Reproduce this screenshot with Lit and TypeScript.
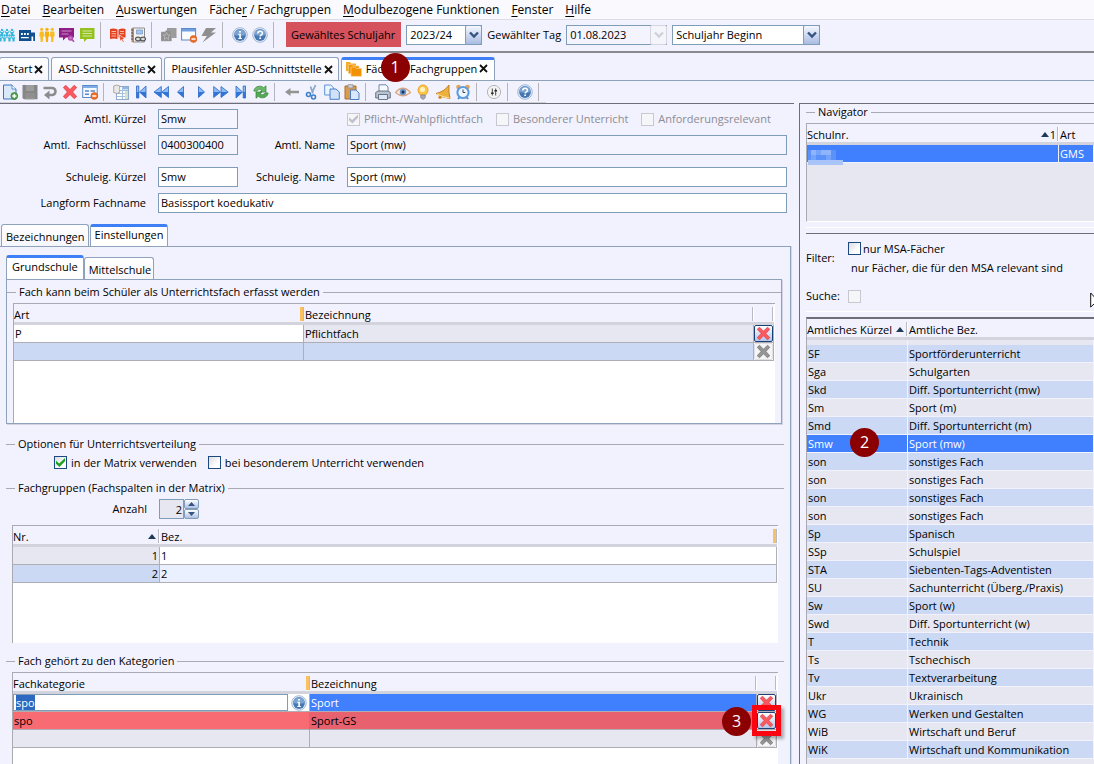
import { LitElement, html, css, svg, nothing } from "lit";
import { customElement, state, query } from "lit/decorators.js";
import { classMap } from "lit/directives/class-map.js";

const person = (x: number, c: string) => svg`
  <circle cx=${x} cy="2.300" r="1.600" fill=${c} /><path d="M${x - 2} 4.500h4l.4 5h-1l-.4 5.500h-2l-.4-5.500h-1z" fill=${c} />`;
const pupil = (x: number, y: number) => svg`
  <circle cx=${x} cy=${y} r="1.200" fill="#35b8dc" /><path d="M${x - 2.2} ${y}l1.200 2h2l1.200-2v2l-1.100 1.400v2.600h-2.200v-2.600l-1.100-1.400z" fill="#35b8dc" />`;
const orb = svg`
  <circle cx="8" cy="8" r="7.300" fill="#e6eef8" stroke="#8fa9cb" stroke-width=".8" />
  <circle cx="8" cy="8" r="5.900" fill="#4577b2" /><path d="M2.300 8a5.700 5.700 0 0 1 11.400 0q-5.500 1.500-11.400 0z" fill="#7ba3d2" />`;
const arrow = (light: string, dark: string) => svg`
  <path d=${light} fill="#8dbbf5" stroke="#2a66c0" stroke-width=".8" stroke-linejoin="round" /><path d=${dark} fill="#2f74d6" />`;

const ICONS: Record<string, unknown> = {
  pupils: svg`${pupil(3, 3)}${pupil(8, 3)}${pupil(13, 3)}${pupil(5.5, 8.5)}${pupil(10.5, 8.5)}${pupil(1.5, 8.5)}${pupil(14.5, 8.5)}`,
  school: svg`<path d="M0 3h12v2.500h4V14H0z" fill="#0f4f8f" /><path d="M2 6h1.800v2H2zM5 6h1.800v2H5zM8 6h1.800v2H8zM2 10h7.800v1.200H2zM12.500 9.500h1.700V14h-1.700z" fill="#fff" />`,
  staff: svg`${person(2.7, "#f8bd22")}${person(8, "#f5ae10")}${person(13.3, "#f8bd22")}`,
  board: svg`<path d="M0 1h15v9.500H7l-3 3v-3H0z" fill="#8e1d86" /><path d="M2.500 4h10M2.500 7h7" stroke="#c98fc6" /><circle cx="11.500" cy="11" r="2" fill="#c77cc2" stroke="#b04aa9" stroke-width="1.300" /><path d="m13 12.500 2 2.300" stroke="#b04aa9" stroke-width="1.600" />`,
  chat: svg`<path d="M1 1h14.500v11H8l-3 3v-3H1z" fill="#95c11f" /><path d="M3.500 4h9.500M3.500 6.500h9.500M3.500 9h9.500" stroke="#d5e6a4" />`,
  book: svg`<path d="M0 2q4-1 7.500.5V12Q4 11 0 12zM8.500 2.500Q12 1 15.500 2v8.500H8.500z" fill="#e2431e" /><path d="M1.500 4.500h4.500M1.500 6.700h4.500M1.500 9h4.500M10 4.500h4M10 6.700h4" stroke="#f6b7a5" /><path d="m9.500 8 5.500 3.800-2.300.4 1.500 2.400-1.200.7-1.400-2.500-1.600 1.400z" fill="#e2431e" stroke="#fff" stroke-width=".6" />`,
  binder: svg`<path d="M2.500 1h12v14h-12z" fill="#f3f3f3" stroke="#8d8d8d" /><path d="M1.500 1h2.500v14H1.500z" fill="#b28b70" /><path d="M1 3h2M1 6h2M1 9h2M1 12h2" stroke="#555" /><path d="M6.500 3h6v4h-6z" fill="#a5c5ec" stroke="#7094c0" stroke-width=".7" /><ellipse cx="8" cy="12" rx="2.500" ry="1.900" fill="#ddd" stroke="#555" stroke-width="1.200" /><ellipse cx="13" cy="12" rx="2.500" ry="1.900" fill="#ddd" stroke="#555" stroke-width="1.200" />`,
  favorites: svg`<path d="M6 1h9.500v10H6z" fill="#9b9b9b" /><path d="M0 5h4l1-1.500h5.500V14H0z" fill="#8f8f8f" stroke="#a8a8a8" stroke-width=".6" /><path d="m5.500 5.500 1 2.400 2.600.2-2 1.700.6 2.600-2.200-1.400-2.200 1.400.6-2.600-2-1.700 2.600-.2z" fill="none" stroke="#c0c0c0" stroke-width=".8" />`,
  windowRemove: svg`<rect x=".6" y="1.500" width="14" height="11.500" fill="#fbfdff" stroke="#5c88c8" /><path d="M1 2h13.300v2.500H1z" fill="#6f9fe2" /><circle cx="12.500" cy="12" r="3.400" fill="#f0722a" stroke="#c9501b" stroke-width=".6" /><path d="M10.500 12h4" stroke="#fff" stroke-width="1.500" />`,
  bolt: svg`<path d="M5 1h10l-5 4.500h5L1.500 15.500 6 9H.5z" fill="#8f8f8f" />`,
  info: svg`${orb}<path d="M7 4h2v1.500H7zM6.300 6.700h2.600v4.200h1V12H6.300v-1.100h1V7.800h-1z" fill="#fff" />`,
  help: svg`${orb}<path d="M5.800 6.500q0-2.300 2.300-2.300t2.300 2q0 1.300-1.200 1.800-1 .5-1 1.500" fill="none" stroke="#fff" stroke-width="1.500" /><path d="M7.300 10.500h1.700V12H7.300z" fill="#fff" />`,
  folders: svg`<path d="M0 1h4l1 1.500h5V10H0z" fill="#f9ab2c" /><path d="M2.500 3.500h4l1 1.500H13v7.500H2.500z" fill="#f39200" stroke="#fbd08a" stroke-width=".7" /><path d="M5 6h4l1 1.500h5.500V15.300H5z" fill="#f39200" stroke="#fbd08a" stroke-width=".7" />`,
  add: svg`<path d="M1.500 1h8.500l4 4v10H1.500z" fill="#d9e8fb" stroke="#3e74bb" /><path d="M10 1v4h4" fill="#fff" stroke="#3e74bb" stroke-width=".8" /><circle cx="12.300" cy="12" r="3.400" fill="#5aa857" stroke="#2b7a2a" stroke-width=".7" /><path d="M10.300 12h4M12.300 10v4" stroke="#fff" stroke-width="1.300" />`,
  save: svg`<path d="M.5 1h15v14.300H2L.5 14z" fill="#868686" /><path d="M4 1h8v6H4z" fill="#9d9d9d" /><path d="M3.500 9.500h9v5.800h-9z" fill="#999" /><path d="M4 11h8M4 13h8" stroke="#868686" />`,
  undo: svg`<path d="M1.500 4h8.500a3.500 3.500 0 0 1 0 7H6.500" fill="none" stroke="#8c8c8c" stroke-width="2.600" /><path d="M7.500 6.500 2 11l5.500 4.500z" fill="#8c8c8c" />`,
  remove: svg`<path d="M3.800 1.300 8 5.600l4.200-4.300 2.500 2.200L10.600 8l4.100 4.500-2.500 2.200L8 10.400l-4.200 4.300-2.500-2.200L5.400 8 1.300 3.500z" fill="#fa5a5f" stroke="#e0363c" stroke-width=".7" stroke-linejoin="round" />`,
  form: svg`<rect x=".7" y="1.500" width="14.500" height="12" fill="#f4f9ff" stroke="#5c88c8" /><path d="M1 2h14v2H1z" fill="#7fabe6" /><path d="M3 7h4M8.500 7h4.500M3 10.300h4" stroke="#5c88c8" stroke-width="1.500" /><circle cx="12.300" cy="12" r="3.400" fill="#f0722a" stroke="#c9501b" stroke-width=".6" /><path d="M10.300 12h4" stroke="#fff" stroke-width="1.500" />`,
  table: svg`<rect x="3.500" y="2.500" width="12" height="13" fill="#fff" stroke="#8fa9cb" /><path d="M4 6.500h11M4 9.500h11M4 12.500h11" stroke="#a4bfe0" /><path d="M9.500 3v12" stroke="#a4bfe0" /><path d="M10 3h5v2.500h-5z" fill="#8fb7e6" /><path d="M12 7h3v8h-3z" fill="#cfe3c8" /><path d="M.7 2q3-2 6 0v6.500q-3 2-6 0z" fill="#e8e8e4" stroke="#98988f" stroke-width=".8" />`,
  first: arrow("M3.500 2h2.300v12H3.500zM13 2v12L6.500 8z", "M13 8v6L6.500 8zM3.500 8h2.300v6H3.500z"),
  rewind: arrow("M8.300 2.500v11L1 8zM15.500 2.500v11L8.700 8z", "M8.300 8v5.500L1 8zM15.500 8v5.500L8.700 8z"),
  prev: arrow("M10.500 2.500v11L4.500 8z", "M10.500 8v5.500L4.500 8z"),
  next: arrow("M5.500 2.500v11l6-5.500z", "M5.500 8v5.500l6-5.500z"),
  forward: arrow("M.7 2.500v11L7.500 8zM8 2.500v11L15.200 8z", "M.7 8v5.500L7.500 8zM8 8v5.500L15.200 8z"),
  last: arrow("M3 2v12l6.500-6zM10.200 2h2.300v12h-2.300z", "M3 8v6l6.500-6zM10.200 8h2.300v6h-2.300z"),
  refresh: svg`<path d="M.8 7Q2 1.800 7.500 2.200q2 .2 3.200 1.500L13 1.800V8H7l2-2Q6 4 3.500 7.300z" fill="#69b968" stroke="#36843a" stroke-width=".7" stroke-linejoin="round" /><path d="M15.200 9q-1.200 5.200-6.700 4.800-2-.2-3.200-1.500L3 14.200V8h6l-2 2q3 2 5.500-1.300z" fill="#55a856" stroke="#36843a" stroke-width=".7" stroke-linejoin="round" />`,
  back: svg`<path d="M15 6.700v2.600H6.500V12L1 8l5.500-4v2.700z" fill="#939393" />`,
  cut: svg`<path d="M11.500 1 8 9M6.500 2.500 9 9.500" stroke="#8aa7cc" stroke-width="1.800" /><circle cx="4.500" cy="10.500" r="2" fill="none" stroke="#3f7fca" stroke-width="1.600" /><circle cx="9.500" cy="13" r="2" fill="none" stroke="#3f7fca" stroke-width="1.600" />`,
  copy: svg`<path d="M.7 1h6l3 3v7h-9z" fill="#edf5fe" stroke="#5c92da" /><path d="M6 5h6l3.300 3v7.300H6z" fill="#cfe2fa" stroke="#4580cc" />`,
  paste: svg`<path d="M1 2h11v13H1z" fill="#d99b50" stroke="#a9702d" /><path d="M4 .7h5V4H4z" fill="#d2d2d2" stroke="#888" stroke-width=".7" /><path d="M6.500 6H12l3 3v6.500H6.500z" fill="#d9e8fb" stroke="#4c7dc4" />`,
  print: svg`<path d="M4 .8h7L13 3v6H4z" fill="#f6faff" stroke="#6d86a8" /><path d="M.7 8.500 3 7h10l2.300 1.500V14H.7z" fill="#b9c2cf" stroke="#515c6d" stroke-width=".8" /><path d="M3.500 10.500h9v5h-9z" fill="#dce8f7" stroke="#515c6d" stroke-width=".8" />`,
  eye: svg`<path d="M.5 8.500Q8 0 15.500 8.500 8 15 .5 8.500z" fill="#fbf1e8" stroke="#dba782" stroke-width="1.300" /><circle cx="8" cy="8" r="3.300" fill="#6a97d0" /><circle cx="8" cy="8" r="1.500" fill="#1c2c4a" />`,
  bulb: svg`<path d="M5.500 11Q2.500 8.500 3 5.500 4 1 8 1t5 4.500q.5 3-2.500 5.500z" fill="#fcc64a" stroke="#eda52e" /><circle cx="7.500" cy="5.500" r="2.500" fill="#fff3c4" /><path d="M5.700 11h4.600v2.800L8 15.500l-2.300-1.700z" fill="#a4a9b2" stroke="#777" stroke-width=".6" />`,
  bell: svg`<path d="M14 1q-.5 8 1 13.500Q7 14 1 9.500 9.500 7.500 14 1z" fill="#edb03a" stroke="#bd7d1b" stroke-width=".9" /><path d="M2 9.800q5 3.500 12.500 4.200" fill="none" stroke="#fbe39a" stroke-width="1.200" /><circle cx="5" cy="13.300" r="1.600" fill="#d08a18" />`,
  alarm: svg`<circle cx="3.500" cy="3" r="2.300" fill="#e3a356" /><circle cx="12.500" cy="3" r="2.300" fill="#e3a356" /><path d="m3 15 2-2.500M13 15l-2-2.500" stroke="#4a80c4" stroke-width="1.800" /><circle cx="8" cy="8.500" r="5.600" fill="#eef6ff" stroke="#5a9be0" stroke-width="2" /><path d="M8 5.500v3h2.300" fill="none" stroke="#444" />`,
  tune: svg`<circle cx="8" cy="8" r="6.600" fill="#f4f4f4" stroke="#b5b5b5" /><path d="M6.300 4.500v7M9.700 4.500v7" stroke="#444" stroke-width="1" /><path d="M5 8.500h2.700V10H5zM8.400 6h2.700v1.500H8.400z" fill="#333" />`,
};
const icon = (name: string) => html`<svg class="icon" viewBox="0 0 16 16" aria-hidden="true">${ICONS[name]}</svg>`;

const MENU = [["", "D", "atei"], ["", "B", "earbeiten"], ["", "A", "uswertungen"], ["Fäche", "r", " / Fachgruppen"],
  ["", "M", "odulbezogene Funktionen"], ["", "F", "enster"], ["", "H", "ilfe"]];
const MAIN_TOOLS = [["pupils", "school", "staff", "board", "chat"], ["book", "binder"], ["favorites", "windowRemove", "bolt"], ["info", "help"]];
const PAGE_TOOLS = [["add", "save", "undo", "remove", "form"], ["table", "first", "rewind", "prev", "next", "forward", "last", "refresh"],
  ["back", "cut", "copy", "paste"], ["print", "eye", "bulb", "bell", "alarm"], ["tune"], ["help"]];
const SUBJECTS = [["SF", "Sportförderunterricht"], ["Sga", "Schulgarten"], ["Skd", "Diff. Sportunterricht (mw)"], ["Sm", "Sport (m)"],
  ["Smd", "Diff. Sportunterricht (m)"], ["Smw", "Sport (mw)"], ["son", "sonstiges Fach"], ["son", "sonstiges Fach"],
  ["son", "sonstiges Fach"], ["son", "sonstiges Fach"], ["Sp", "Spanisch"], ["SSp", "Schulspiel"], ["STA", "Siebenten-Tags-Adventisten"],
  ["SU", "Sachunterricht (Überg./Praxis)"], ["Sw", "Sport (w)"], ["Swd", "Diff. Sportunterricht (w)"], ["T", "Technik"],
  ["Ts", "Tschechisch"], ["Tv", "Textverarbeitung"], ["Ukr", "Ukrainisch"], ["WG", "Werken und Gestalten"],
  ["WiB", "Wirtschaft und Beruf"], ["WiK", "Wirtschaft und Kommunikation"]];

@customElement("app-root")
export class AppRoot extends LitElement {
  @state() private selected = 5;
  @query(".cell-edit") private editor!: HTMLInputElement;

  static styles = css`
    :host { display: block; font: 11px/16px "Open Sans", "Noto Sans", sans-serif; color: #000; }
    *, *::before, *::after { box-sizing: border-box; }
    button, input, select { font: inherit; color: inherit; margin: 0; border-radius: 0; }
    button { padding: 0; border: 0; background: none; }
    .app { position: relative; height: 100vh; overflow: hidden; display: flex; flex-direction: column; background: #f2f2fe; white-space: nowrap; }
    .icon { display: block; width: 16px; height: 16px; }

    .menu { display: flex; flex: none; gap: 12px; height: 20px; padding-left: 1px; background: #f9f9fe; border-bottom: 1px solid #dcdce6; font-size: 12px; line-height: 18px; }
    .menu u { text-underline-offset: 2px; }
    .main-bar { display: flex; flex: none; align-items: center; height: 33px; padding-bottom: 2px; border-bottom: 2px solid #8a8a90; background: #f2f2fe; }
    .tools { display: flex; align-items: center; }
    .main-bar .tools { margin-left: -3px; }
    .tool { width: 20px; height: 20px; display: grid; place-items: center; }
    .sep { width: 11px; height: 26px; padding-left: 3px; }
    .sep::before { content: ""; display: block; width: 1px; height: 100%; background: #b4b4ba; }
    .year { background: #d5525c; height: 25px; line-height: 25px; padding: 0 6px 0 5px; margin: 0 5px; }
    .combo { position: relative; height: 20px; }
    .combo select, .combo input { display: block; width: 100%; height: 20px; border: 1px solid #7f9db9; background: #fff; padding: 0 18px 0 3px; appearance: none; outline: none; }
    .combo input { background: #f4f4ff; }
    .combo .drop { position: absolute; right: 0; top: 0; width: 17px; height: 20px; border: 1px solid #7f9db9; border-radius: 2px; background: linear-gradient(#f4f7ff, #a9bce2); pointer-events: none; display: grid; place-items: center; }
    .combo .drop.off { background: #f4f4fb; border-color: #d5d5e0; }
    .drop svg { width: 10px; height: 8px; display: block; }
    .combo.school-year { width: 76px; margin-right: 5px; }
    .combo.day { width: 101px; margin: 0 5px; }
    .combo.phase { width: 148px; }

    .tabs { display: flex; flex: none; align-items: flex-end; gap: 2px; }
    .tab { display: flex; align-items: center; position: relative; border: 1px solid #8fa2bb; border-bottom: 0; border-radius: 3px 3px 0 0; background: linear-gradient(#fff, #f6f6fd); }
    .tab.active { border-top: 3px solid #3f7ff5; background: #fff; }
    .page-tabs { height: 28px; padding-top: 4px; border-bottom: 1px solid #8fa2bb; }
    .page-tabs .tab { height: 23px; padding: 0 5px 0 6px; gap: 2px; }
    .page-tabs .tab.active { padding: 0 6px 3px 4px; }
    .page-tabs .tab .icon { margin-right: 2px; }
    .page-tabs .tab:first-child { margin-left: -1px; padding-left: 8px; }
    .close { width: 9px; height: 12px; display: grid; place-items: center; }
    .close svg { width: 9px; height: 9px; display: block; }
    .page-bar { display: flex; flex: none; height: 22px; }
    .page-bar .sep { height: 18px; }
    .page-bar .tools { border-bottom: 1px solid #d0d0dc; }

    .work { flex: 1; min-height: 0; display: grid; grid-template-columns: minmax(0, 1fr) 295px; gap: 5px; }
    .left { border-top: 1px solid #6e6e78; display: flex; flex-direction: column; min-height: 0; padding-top: 5px; }
    .form { display: grid; grid-template-columns: 146px 80px 85px minmax(0, 1fr); column-gap: 12px; row-gap: 6px; padding-right: 7px; margin-bottom: 12px; align-items: center; }
    .form + .form { margin-bottom: 11px; }
    .form > label { text-align: right; white-space: pre; }
    .field { width: 100%; height: 20px; border: 1px solid #7f9db9; background: #fff; padding: 0 2px 2px; outline: none; }
    .field[readonly] { background: #f4f4ff; }
    .wide { grid-column: 2 / -1; }
    .checks { display: flex; gap: 13px; grid-column: 4; }
    .check { display: flex; align-items: center; gap: 4px; height: 13px; }
    .check.off { color: #8c8c94; }
    input[type="checkbox"] { appearance: none; flex: none; width: 13px; height: 13px; border: 1px solid #1c4a80; background: linear-gradient(135deg, #dcdce0, #fff 70%); }
    input[type="checkbox"]:checked::after { content: ""; display: block; width: 9px; height: 9px; margin: 1px; background: #21a121; clip-path: polygon(0 30%, 35% 60%, 100% 0, 100% 35%, 38% 100%, 0 65%); }
    input[type="checkbox"]:disabled { border-color: #c8c8d0; background: #f6f6f8; }
    input[type="checkbox"]:disabled:checked::after { background: #c0c0c8; }

    .sub-tabs { padding-left: 1px; gap: 1px; }
    .sub-tabs .tab { height: 22px; padding: 2px 3px 0 4px; }
    .sub-tabs .tab.active { padding: 0 4px 4px; }
    .panel { flex: 1; min-height: 0; overflow: hidden; display: flex; flex-direction: column; border: solid #8fa2bb; border-width: 1px 1px 0 0; margin-right: 3px; padding: 8px 6px 0 6px; box-shadow: 1px 0 0 #d5d9ea; }
    .school-tabs { gap: 0; }
    .school-tabs .tab { height: 22px; padding: 2px 2px 0 4px; }
    .school-tabs .tab.active { height: 24px; padding: 0 5px 4px; }
    .school { flex: none; border: 1px solid #8fa2bb; box-shadow: 1px 1px 0 #d0d4e4; margin: 0 2px 12px 0; padding-top: 4px; }
    fieldset { margin: 0; padding: 0; border: 0; border-top: 1px solid #aaaab2; min-width: 0; }
    legend { margin-left: 9px; padding: 0 3px; height: 16px; }
    .school fieldset { padding: 3px 6px 0; }
    .school legend { margin-left: 3px; }
    .options .check-row { display: flex; gap: 11px; padding: 4px 0 11px 48px; }
    .count { display: flex; align-items: center; padding: 3px 0 6px; }
    .count label { width: 141px; margin-right: 12px; text-align: right; }
    .count input { width: 25px; height: 20px; border: 1px solid #7f9db9; background: #e7e7f1; text-align: right; padding: 0 1px; }
    .steps { display: grid; grid-template-rows: 10px 10px; width: 15px; }
    .steps button { border: 1px solid #7f9db9; border-radius: 2px; background: linear-gradient(#fff, #afc0e4); display: grid; place-items: center; }
    .steps svg { display: block; width: 7px; height: 4px; }
    .categories { flex: 1; display: flex; flex-direction: column; min-height: 0; }

    .sheet { border: solid #aaaab2; border-width: 1px 0 0 1px; background: #fff; overflow: hidden; padding-right: 1px; }
    .sheet.types { height: 120px; }
    .sheet.groups { height: 118px; margin: 0 6px 10px; }
    .categories .sheet { height: 92px; margin: 3px 6px 0; overflow: visible; }
    .col-type { width: 290px; }
    .col-number { width: 147px; }
    .col-category { width: 297px; }
    .col-action { width: 20px; }
    .col-kind { width: 35px; }
    .col-code { width: 101px; }
    table { width: 100%; border-collapse: separate; border-spacing: 0; table-layout: fixed; }
    th { position: relative; height: 21px; padding: 3px 0 0; text-align: left; font-weight: 400; background: #f2f2fe; border-bottom: 3px solid #d3d3dd; line-height: 15px; }
    th + th { padding-left: 1px; }
    th::after { content: ""; position: absolute; right: 0; top: 3px; height: 14px; width: 2px; border-left: 1px solid #b9b9c2; background: #fff; }
    th.mark::after { width: 4px; border-left: 3px solid #fbc160; background: #b9b9c2; }
    th.plain::after { display: none; }
    .sort { position: absolute; right: 4px; top: 8px; width: 8px; height: 5px; background: #1f3a56; clip-path: polygon(50% 0, 100% 100%, 0 100%); }
    td { position: relative; height: 18px; padding: 0 0 0 1px; line-height: 17px; border: solid #aeaeb4; border-width: 0 1px 1px 0; overflow: hidden; }
    .num { text-align: right; padding: 0 1px 0 0; }
    .gray { background: #e7e7f1; }
    .blue { background: #cbd9f5; }
    .pale { background: #eaf0ff; }
    .pick { background: #4080ff; color: #fff; }
    .red { background: #f86b72; }
    .red-dark { background: #e8616e; }
    .red-row td:first-child { border-right-color: #e8616e; }
    td.act { padding: 0; }
    .delete { display: grid; place-items: center; width: 100%; height: 17px; border: 1px solid #1c4078; border-radius: 2px; background: linear-gradient(#fff, #b3c5ea); }
    .delete:disabled { border-color: #e0e0e4; background: #f5f5f8; }
    .delete:disabled .icon { filter: grayscale(1) brightness(1.2); }
    .delete .icon { width: 15px; height: 15px; }
    td.editing { padding: 0; }
    .edit { display: flex; align-items: center; height: 17px; gap: 3px; padding-right: 2px; }
    .cell-edit { flex: 1; min-width: 0; height: 17px; border: 1px solid #7f9db9; padding: 0 2px; background: #fff; outline: none; line-height: 14px; }
    .cell-edit::selection { background: #2d69c0; color: #fff; }

    .navigator { min-width: 0; min-height: 0; overflow: hidden; border: solid #6e6e78; border-width: 1px 0 0 1px; display: flex; flex-direction: column; padding-left: 6px; }
    .navigator fieldset { flex: none; }
    .schools { height: 99px; margin-top: 3px; background: #e7e7f1; border-bottom: 1px solid #fff; }
    .navigator td { border-color: #f2f2fe; }
    .navigator .sheet { padding-right: 0; }
    .filters { flex: none; margin-top: 5px; border-top: 1px solid #fff; padding-top: 5px; }
    .filter-grid { border-top: 1px solid #6e6e78; display: grid; grid-template-columns: 42px 1fr; align-items: center; padding: 8px 0 7px; row-gap: 14px; border-bottom: 1px solid #fff; }
    .filter-grid .check { gap: 2px; }
    .hint { padding: 7px 0 0 3px; line-height: 12px; }
    .subjects { flex: 1; min-height: 0; margin-top: 5px; border-top: 2px solid #6e6e78; background: #e7e7f1; }
    .subjects td { cursor: default; }
    .subjects .cut { height: 5px; padding: 0; border-bottom: 0; }
    .order { position: absolute; right: 3px; top: 3px; }
    .ranked .sort { right: 10px; }
    .mosaic { position: absolute; left: 1px; top: 26px; width: 35px; height: 15px; display: block; }
    .schools, .subjects, .categories .sheet { position: relative; }

    .badge { position: absolute; z-index: 2; width: 29px; height: 29px; border-radius: 50%; background: #8b0000; color: #fff; font-size: 16px; line-height: 28px; text-align: center; }
    .badge.one { left: 39px; top: -7px; }
    .badge.two { left: 43px; top: 109px; }
    .badge.three { right: 27px; top: 34px; }
    .frame { position: absolute; z-index: 3; right: -3px; top: 32px; width: 29px; height: 31px; border: 5px solid #fa0510; box-shadow: 3px 3px 3px rgba(0, 0, 0, .3); pointer-events: none; }
    .pointer { position: absolute; z-index: 4; right: -8px; top: 292px; width: 12px; height: 18px; display: block; }
  `;

  firstUpdated() {
    this.editor.focus();
    this.editor.select();
  }

  private tools(groups: string[][]) {
    return html`<div class="tools">${groups.map((g) => html`
      ${g.map((n) => html`<button class="tool" aria-label=${n}>${icon(n)}</button>`)}<span class="sep"></span>`)}</div>`;
  }

  private tab(label: string, active = false) {
    return html`<div class=${classMap({ tab: true, active })}>
      ${active ? icon("folders") : nothing}<button>${label}</button>
      <button class="close" aria-label="Schließen"><svg viewBox="0 0 9 9"><path d="M1 1l7 7M8 1L1 8" stroke="#111" stroke-width="1.800" /></svg></button>
      ${active ? html`<span class="badge one">1</span>` : nothing}
    </div>`;
  }

  private drop(off = false) {
    return html`<span class=${classMap({ drop: true, off })}><svg viewBox="0 0 10 8" aria-hidden="true">
      <path d="M1 1.500l4 4 4-4" fill="none" stroke=${off ? "#d0d0da" : "#35547f"} stroke-width="2.400" /></svg></span>`;
  }

  private del(off = false) {
    return html`<td class="act"><button class="delete" ?disabled=${off} aria-label="Löschen">${icon("remove")}</button></td>`;
  }

  render() {
    return html`<div class="app">
      <nav class="menu">${MENU.map(([a, k, b]) => html`<button>${a}<u>${k}</u>${b}</button>`)}</nav>
      <div class="main-bar">
        ${this.tools(MAIN_TOOLS)}
        <label class="year" for="year">Gewähltes Schuljahr</label>
        <div class="combo school-year"><select id="year"><option>2023/24</option></select>${this.drop()}</div>
        <label for="day">Gewählter Tag</label>
        <div class="combo day"><input id="day" value="01.08.2023" readonly />${this.drop(true)}</div>
        <div class="combo phase"><select aria-label="Zeitpunkt"><option>Schuljahr Beginn</option></select>${this.drop()}</div>
      </div>
      <div class="tabs page-tabs">
        ${this.tab("Start")}${this.tab("ASD-Schnittstelle")}${this.tab("Plausifehler ASD-Schnittstelle")}${this.tab("Fächer / Fachgruppen", true)}
      </div>
      <div class="page-bar">${this.tools(PAGE_TOOLS)}</div>

      <div class="work">
        <main class="left">
          <div class="form">
            <label for="ak">Amtl. Kürzel</label><input id="ak" class="field" value="Smw" readonly />
            <div class="checks">
              <label class="check off"><input type="checkbox" checked disabled />Pflicht-/Wahlpflichtfach</label>
              <label class="check off"><input type="checkbox" disabled />Besonderer Unterricht</label>
              <label class="check off"><input type="checkbox" disabled />Anforderungsrelevant</label>
            </div>
            <label for="af">Amtl.  Fachschlüssel</label><input id="af" class="field" value="0400300400" readonly />
            <label for="an">Amtl. Name</label><input id="an" class="field" value="Sport (mw)" readonly />
          </div>
          <div class="form">
            <label for="sk">Schuleig. Kürzel</label><input id="sk" class="field" value="Smw" />
            <label for="sn">Schuleig. Name</label><input id="sn" class="field" value="Sport (mw)" />
            <label for="lf">Langform Fachname</label><input id="lf" class="field wide" value="Basissport koedukativ" />
          </div>
          <div class="tabs sub-tabs"><button class="tab">Bezeichnungen</button><button class="tab active">Einstellungen</button></div>
          <section class="panel">
            <div class="tabs school-tabs"><button class="tab active">Grundschule</button><button class="tab">Mittelschule</button></div>
            <div class="school">
              <fieldset>
                <legend>Fach kann beim Schüler als Unterrichtsfach erfasst werden</legend>
                <div class="sheet types"><table>
                  <colgroup><col class="col-type" /><col /><col class="col-action" /></colgroup>
                  <thead><tr><th class="mark">Art</th><th>Bezeichnung</th><th aria-label="Aktion"></th></tr></thead>
                  <tbody>
                    <tr><td>P</td><td class="gray">Pflichtfach</td>${this.del()}</tr>
                    <tr><td class="blue"></td><td class="blue"></td>${this.del(true)}</tr>
                  </tbody>
                </table></div>
              </fieldset>
            </div>
            <fieldset class="options">
              <legend>Optionen für Unterrichtsverteilung</legend>
              <div class="check-row">
                <label class="check"><input type="checkbox" checked />in der Matrix verwenden</label>
                <label class="check"><input type="checkbox" />bei besonderem Unterricht verwenden</label>
              </div>
            </fieldset>
            <fieldset>
              <legend>Fachgruppen (Fachspalten in der Matrix)</legend>
              <div class="count"><label for="cnt">Anzahl</label><input id="cnt" value="2" inputmode="numeric" />
                <span class="steps">
                  <button aria-label="Mehr"><svg viewBox="0 0 7 4"><path d="M3.500 0L7 4H0z" fill="#35547f" /></svg></button>
                  <button aria-label="Weniger"><svg viewBox="0 0 7 4"><path d="M0 0h7L3.500 4z" fill="#35547f" /></svg></button>
                </span>
              </div>
              <div class="sheet groups"><table>
                <colgroup><col class="col-number" /><col /></colgroup>
                <thead><tr><th>Nr.<span class="sort"></span></th><th class="mark">Bez.</th></tr></thead>
                <tbody>
                  <tr><td class="num gray">1</td><td>1</td></tr>
                  <tr><td class="num blue">2</td><td class="pale">2</td></tr>
                </tbody>
              </table></div>
            </fieldset>
            <fieldset class="categories">
              <legend>Fach gehört zu den Kategorien</legend>
              <div class="sheet"><table>
                <colgroup><col class="col-category" /><col /><col class="col-action" /></colgroup>
                <thead><tr><th class="mark">Fachkategorie</th><th>Bezeichnung</th><th aria-label="Aktion"></th></tr></thead>
                <tbody>
                  <tr><td class="editing"><div class="edit"><input class="cell-edit" aria-label="Fachkategorie" value="spo" />${icon("info")}</div></td><td class="pick">Sport</td>${this.del()}</tr>
                  <tr class="red-row"><td class="red">spo</td><td class="red-dark">Sport-GS</td>${this.del()}</tr>
                  <tr><td class="gray"></td><td class="gray"></td>${this.del(true)}</tr>
                </tbody>
              </table><span class="badge three">3</span><span class="frame"></span></div>
            </fieldset>
          </section>
        </main>

        <aside class="navigator">
          <fieldset>
            <legend>Navigator</legend>
            <div class="sheet schools"><table>
              <colgroup><col /><col class="col-kind" /></colgroup>
              <thead><tr><th class="ranked">Schulnr.<span class="sort"></span><span class="order">1</span></th><th class="plain">Art</th></tr></thead>
              <tbody><tr><td class="pick"></td><td class="pick">GMS</td></tr></tbody>
            </table>
            <svg class="mosaic" viewBox="0 0 35 15" aria-hidden="true">
              <path d="M0 0h28v10H0z" fill="#5a92fa" /><path d="M3 0h5v5H3zM13 0h5v5h-5zM18 0h5v5h-5z" fill="#8fb4fb" /><path d="M8 0h5v5H8zM3 5h5v5H3zM18 5h5v5h-5z" fill="#74a3fc" /><path d="M0 10h35v5H0z" fill="#a9c4f8" />
            </svg></div>
          </fieldset>
          <div class="filters"><div class="filter-grid">
            <span>Filter:</span>
            <div><label class="check"><input type="checkbox" />nur MSA-Fächer</label><div class="hint">nur Fächer, die für den MSA relevant sind</div></div>
            <label for="search">Suche:</label><input id="search" type="checkbox" disabled />
          </div></div>
          <div class="sheet subjects"><table>
            <colgroup><col class="col-code" /><col /></colgroup>
            <thead><tr><th>Amtliches Kürzel<span class="sort"></span></th><th class="plain">Amtliche Bez.</th></tr></thead>
            <tbody>
              <tr><td class="cut gray"></td><td class="cut gray"></td></tr>
              ${SUBJECTS.map(([k, n], i) => {
                const c = i === this.selected ? "pick" : i % 2 ? "gray" : "blue";
                return html`<tr @click=${() => (this.selected = i)}><td class=${c}>${k}</td><td class=${c}>${n}</td></tr>`;
              })}
            </tbody>
          </table><span class="badge two">2</span></div>
        </aside>
      </div>
      <svg class="pointer" viewBox="0 0 12 18" aria-hidden="true"><path d="M.7 1v14l3.300-3 2 5 2-1-2-4.500h4.500z" fill="#fff" stroke="#111" /></svg>
    </div>`;
  }
}
